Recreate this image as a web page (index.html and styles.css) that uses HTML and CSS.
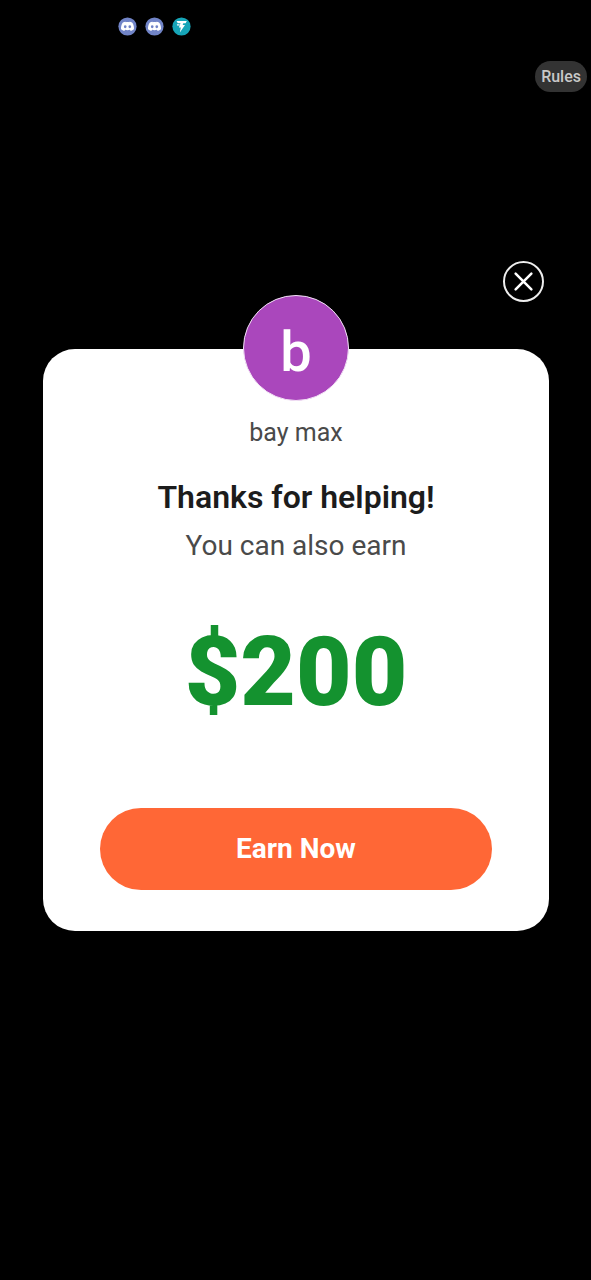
FILE: index.html
```html
<!DOCTYPE html>
<html lang="en">
<head>
<meta charset="utf-8">
<meta name="viewport" content="width=device-width, initial-scale=1">
<title>Thanks for helping</title>
<link rel="stylesheet" href="styles.css">
</head>
<body>
<svg class="symbols" aria-hidden="true">
  <symbol id="chat" viewBox="0 0 20 20">
    <circle cx="10" cy="10" r="9.6" fill="#7184c7"/>
    <path fill="#fff" d="M8.2 5.4 7.9 5C6.8 5.200 5.800 5.500 4.900 6C3.500 8.200 3 10.500 3.200 13C4.300 13.900 5.400 14.400 6.600 14.700L7.400 13.500C9.100 14 10.900 14 12.600 13.500L13.400 14.700C14.600 14.400 15.700 13.900 16.800 13C17 10.500 16.500 8.200 15.100 6C14.200 5.500 13.200 5.200 12.100 5L11.800 5.400C10.600 5.200 9.400 5.200 8.200 5.400Z"/>
    <ellipse cx="7.600" cy="10.300" rx="1.400" ry="1.500" fill="#7184c7"/>
    <ellipse cx="12.400" cy="10.300" rx="1.400" ry="1.500" fill="#7184c7"/>
  </symbol>
</svg>
<header class="status-bar">
  <svg class="status-icon" aria-hidden="true"><use href="#chat"/></svg>
  <svg class="status-icon" aria-hidden="true"><use href="#chat"/></svg>
  <svg class="status-icon" viewBox="0 0 20 20" aria-hidden="true">
    <circle cx="10" cy="10" r="9.600" fill="#16a5b8"/>
    <path fill="#fff" d="M4.800 4.200H15.600L14.300 6.500H11.900L11.200 8.300H13.700L8.300 16.200L9.300 11H7.200L9 6.500H6Z"/>
    <path d="M5.200 8.300H8" stroke="#fff" stroke-width="1.300"/>
  </svg>
</header>
<nav class="toolbar">
  <button class="rules" type="button">Rules</button>
</nav>
<main class="dialog">
  <div class="dialog-top">
    <button class="close" type="button" aria-label="Close">
      <svg class="close-icon" viewBox="0 0 20 20" aria-hidden="true"><path d="M2.500 2.500 17.500 17.500M17.500 2.500 2.500 17.500" stroke="#fff" stroke-width="2.400" stroke-linecap="round"/></svg>
    </button>
  </div>
  <section class="card">
    <div class="avatar">b</div>
    <p class="name">bay max</p>
    <h1 class="title">Thanks for helping!</h1>
    <p class="subtitle">You can also earn</p>
    <p class="amount">$200</p>
    <button class="earn" type="button">Earn Now</button>
  </section>
</main>
</body>
</html>
```

FILE: styles.css
```css
* {
  box-sizing: border-box;
}

body {
  margin: 0;
  min-height: 100vh;
  background: #000;
  font-family: Roboto, "Liberation Sans", sans-serif;
}

button {
  border: 0;
  padding: 0;
  font-family: inherit;
  cursor: pointer;
}

.symbols {
  display: none;
}

.status-bar {
  display: flex;
  align-items: center;
  gap: 8px;
  height: 52px;
  padding-left: 118px;
}

.status-icon {
  width: 19px;
  height: 19px;
}

.toolbar {
  display: flex;
  justify-content: flex-end;
  padding: 9px 4px 0;
}

.rules {
  padding: 0 6px;
  border-radius: 16px;
  background: #333;
  color: #c8c8c8;
  font-size: 16px;
  font-weight: 500;
  line-height: 31px;
}

.dialog {
  padding: 169px 42px 0 43px;
}

.dialog-top {
  display: flex;
  justify-content: flex-end;
  padding-right: 5px;
}

.close {
  display: flex;
  align-items: center;
  justify-content: center;
  width: 41px;
  height: 41px;
  border: 2px solid #eee;
  border-radius: 50%;
  background: transparent;
}

.close-icon {
  width: 21px;
  height: 21px;
}

.card {
  display: flex;
  flex-direction: column;
  align-items: center;
  margin-top: 47px;
  padding: 0 57px 41px;
  border-radius: 32px;
  background: #fff;
  text-align: center;
}

.avatar {
  width: 106px;
  height: 106px;
  margin-top: -54px;
  border: 1px solid #f3e3f6;
  border-radius: 50%;
  background: #aa47bc;
  color: #fff;
  font-size: 56px;
  font-weight: 500;
  line-height: 112px;
}

.name,
.title,
.subtitle,
.amount {
  margin: 0;
}

.name {
  margin-top: 16px;
  color: #4a4a4a;
  font-size: 25px;
  line-height: 32px;
}

.title {
  margin-top: 28px;
  color: #1c1c1c;
  font-size: 32px;
  font-weight: 600;
  line-height: 40px;
}

.subtitle {
  margin-top: 9px;
  color: #4a4a4a;
  font-size: 28px;
  line-height: 40px;
}

.amount {
  margin-top: 50px;
  color: #14922f;
  font-size: 96px;
  font-weight: 900;
  line-height: 112px;
}

.earn {
  width: 100%;
  margin-top: 80px;
  border-radius: 41px;
  background: #ff6736;
  color: #fff;
  font-size: 28px;
  font-weight: 700;
  line-height: 82px;
}
```
